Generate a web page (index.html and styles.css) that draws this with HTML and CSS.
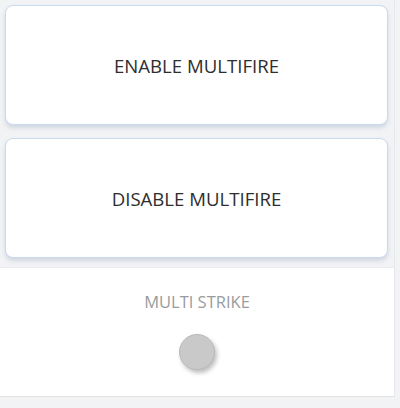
FILE: index.html
```html
<!DOCTYPE html>
<html>
<head>
<meta charset="utf-8">
<link rel="stylesheet" href="styles.css">
</head>
<body>
<div class="page">
  <div class="col">
    <button class="card">ENABLE MULTIFIRE</button>
    <button class="card second">DISABLE MULTIFIRE</button>
    <div class="panel">
      <div class="label">MULTI STRIKE</div>
      <div class="knob"></div>
    </div>
  </div>
</div>
</body>
</html>
```

FILE: styles.css
```css
html, body {
  margin: 0;
  padding: 0;
  background: #f2f3f5;
}
.page {
  width: 400px;
  height: 408px;
  font-family: "Open Sans", "Noto Sans", sans-serif;
}
.col {
  width: 394px;
  display: flex;
  flex-direction: column;
  border-right: 1px solid #e6e8eb;
  padding-top: 5px;
}
.card {
  margin: 0 6px 0 5px;
  height: 120px;
  background: #ffffff;
  border: 1px solid #c9d9ee;
  border-radius: 8px;
  box-shadow: 0 3px 4px rgba(150, 165, 190, 0.35);
  font-family: "Open Sans", sans-serif;
  font-size: 18.6px;
  color: #2e2e2e;
  padding: 0;
}
.second {
  margin-top: 13px;
}
.panel {
  margin-top: 9px;
  height: 128px;
  background: #ffffff;
  border-top: 1px solid #ececec;
  border-bottom: 1px solid #e2e2e2;
  display: flex;
  flex-direction: column;
  align-items: center;
}
.label {
  margin-top: 22px;
  font-size: 16.5px;
  color: #9a9ca0;
}
.knob {
  margin-top: 21px;
  width: 34px;
  height: 34px;
  border-radius: 50%;
  background: #c9c9c9;
  border: 1px solid #b9b9b9;
  box-shadow: 2px 3px 4px rgba(0, 0, 0, 0.25);
}
```
